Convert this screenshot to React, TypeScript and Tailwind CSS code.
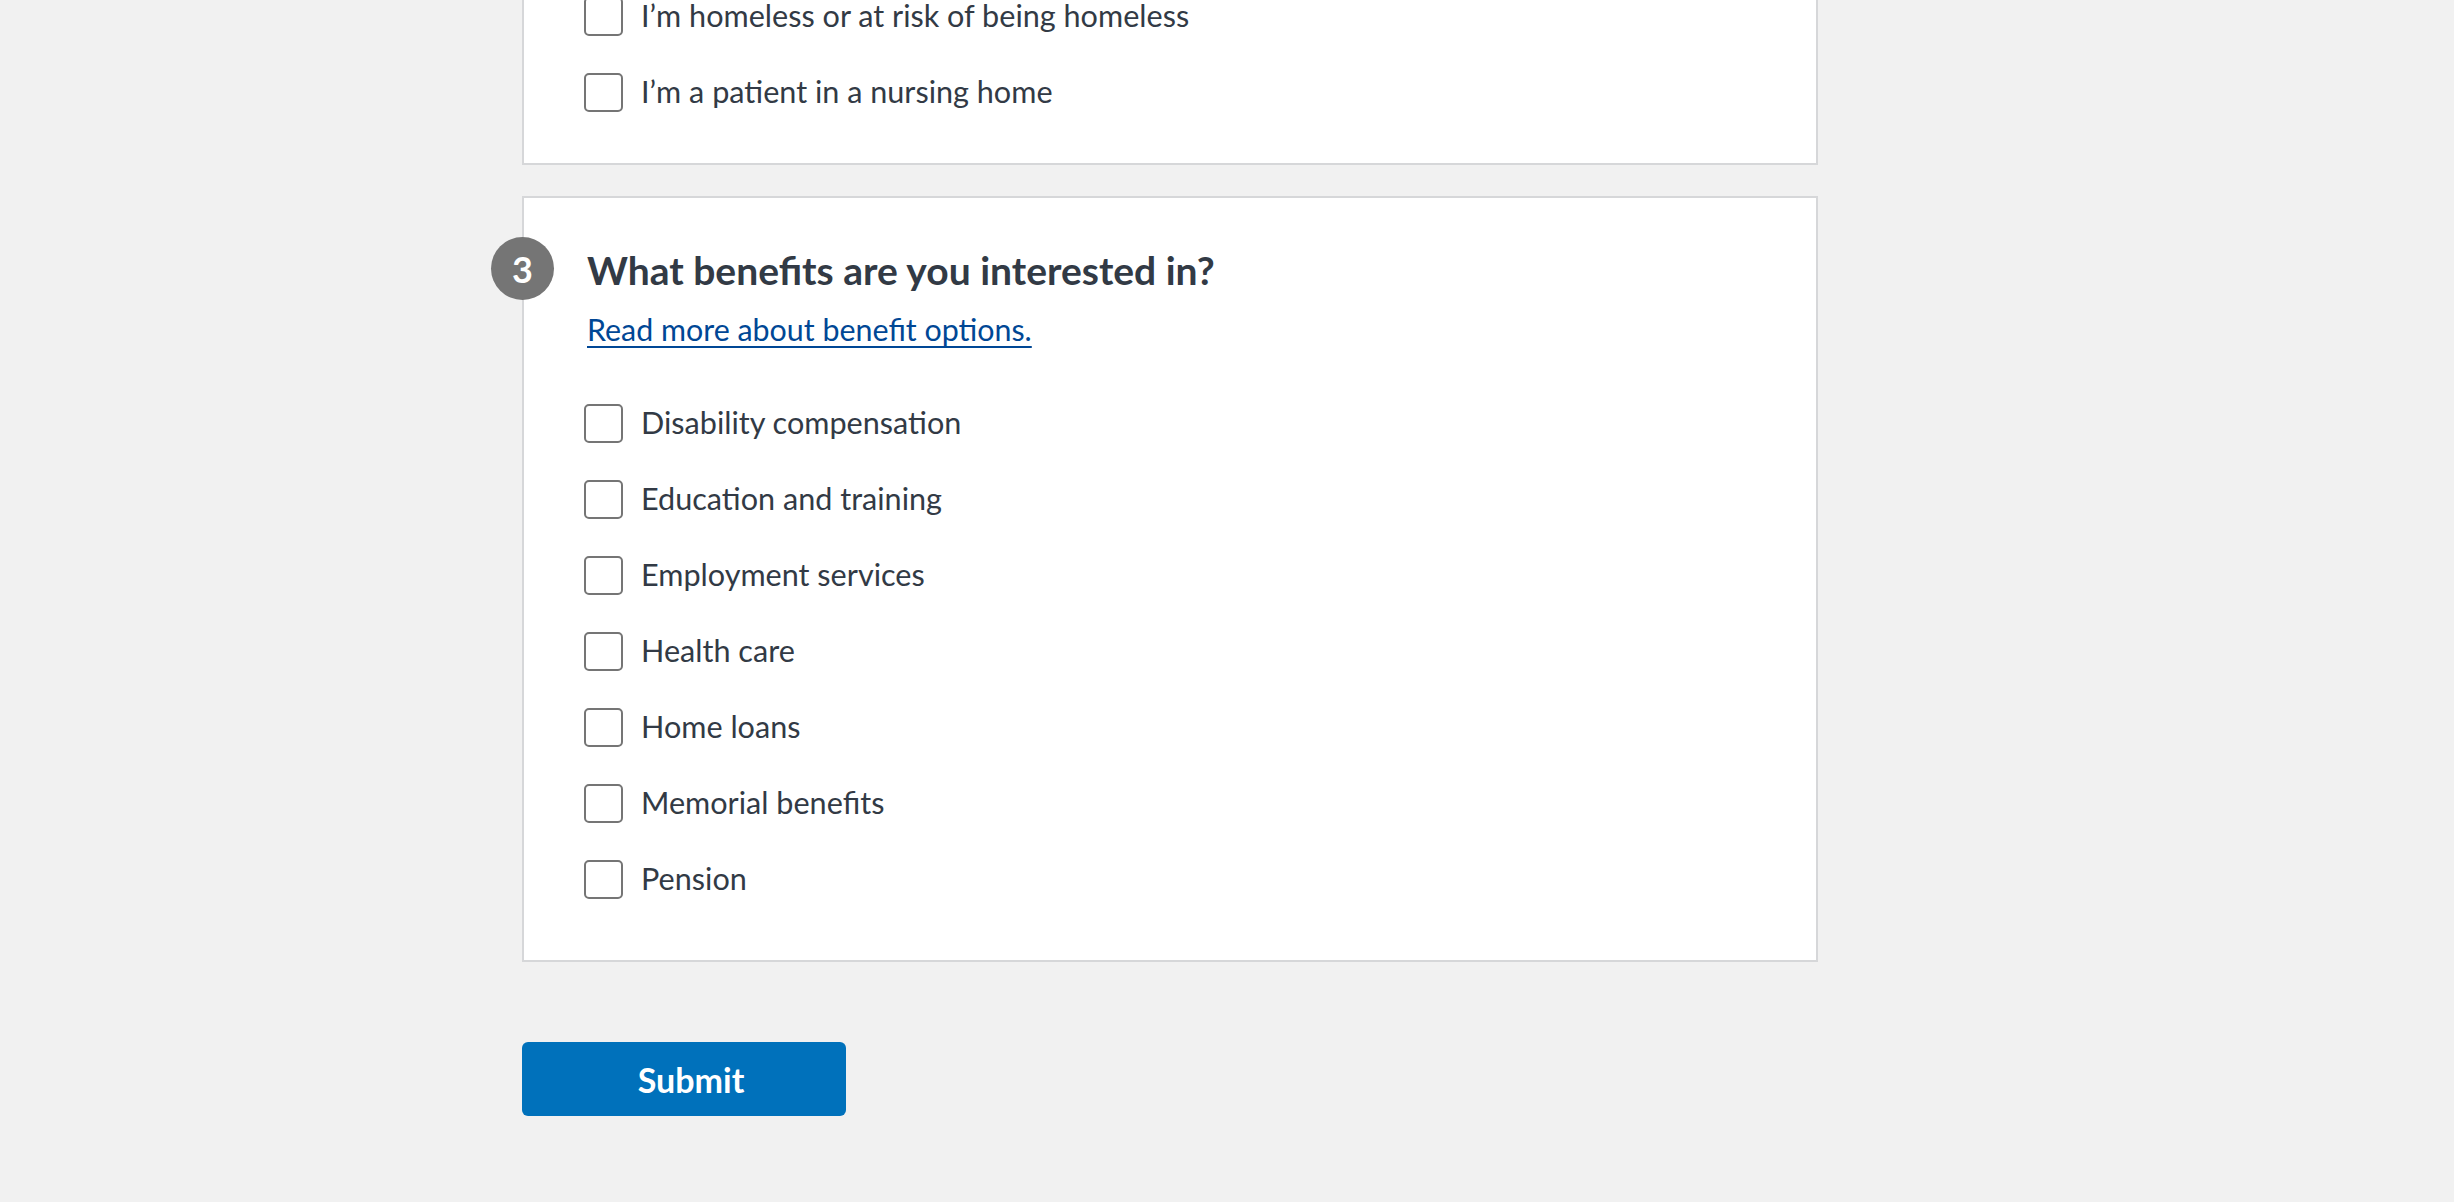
import React from 'react';

const benefits = [
  'Disability compensation',
  'Education and training',
  'Employment services',
  'Health care',
  'Home loans',
  'Memorial benefits',
  'Pension',
];

const Check = ({ label }: { label: string }) => (
  <label className="flex h-[39px] items-center gap-[18px]">
    <span className="h-[39px] w-[39px] shrink-0 rounded-[5px] border-2 border-[#757575] bg-white" />
    <span className="text-[30.6px] leading-none">{label}</span>
  </label>
);

export default function App() {
  return (
    <div className="h-[1202px] overflow-hidden bg-[#f1f1f1] font-['Lato',sans-serif] text-[#323a45]">
      <div className="ml-[522px] w-[1296px]">
        <section className="border-x-2 border-b-2 border-[#d6d7d9] bg-white pb-[51px] pl-[60px]">
          <div className="-mt-[3px] flex flex-col gap-[37px]">
            <Check label="I’m homeless or at risk of being homeless" />
            <Check label="I’m a patient in a nursing home" />
          </div>
        </section>

        <section className="relative mt-[31px] border-2 border-[#d6d7d9] bg-white pb-[61px] pl-[60px] pt-[39px]">
          <div className="absolute -left-[33px] top-[39px] grid h-[63px] w-[63px] place-items-center rounded-full bg-[#757575] text-[36px] font-bold text-white">
            3
          </div>
          <div className="mt-[1px] flex h-[64px] items-center pl-[3px]">
            <h2 className="text-[39px] font-bold leading-none">What benefits are you interested in?</h2>
          </div>
          <a
            href="#"
            className="ml-[3px] mt-[7px] block h-[40px] w-fit text-[30.4px] leading-[40px] text-[#004795] underline decoration-2 underline-offset-[5px]"
          >
            Read more about benefit options.
          </a>
          <div className="mt-[55px] flex flex-col gap-[37px]">
            {benefits.map((b) => (
              <Check key={b} label={b} />
            ))}
          </div>
        </section>

        <button className="mt-[80px] h-[74px] w-[324px] rounded-[6px] bg-[#0071bb] pl-[14px] text-[34px] font-bold text-white">
          Submit
        </button>
      </div>
    </div>
  );
}
